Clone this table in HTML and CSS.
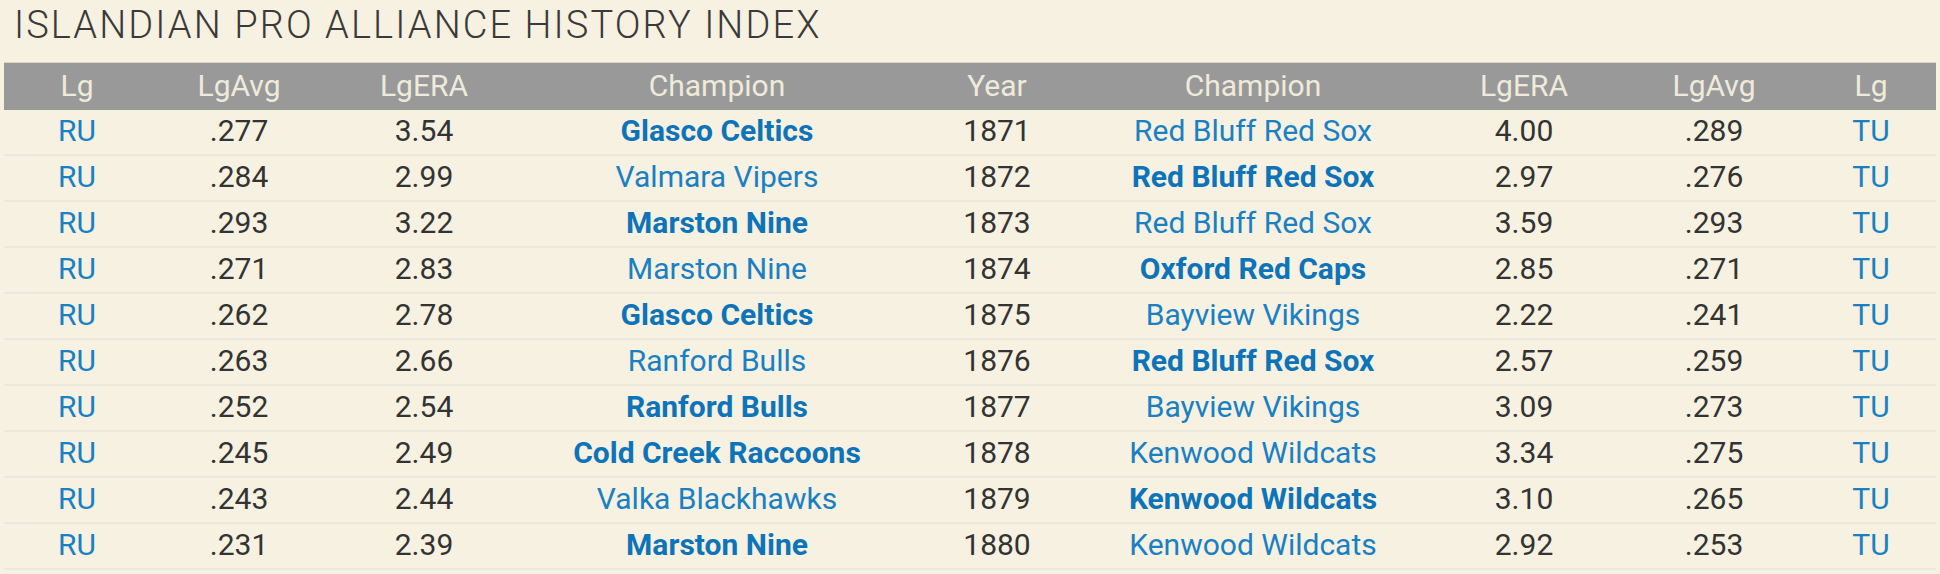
FILE: index.html
```html
<!DOCTYPE html>
<html lang="en">
<head>
<meta charset="utf-8">
<title>Islandian Pro Alliance History Index</title>
<link rel="stylesheet" href="styles.css">
</head>
<body>
<div class="page">
  <h1 class="title">ISLANDIAN PRO ALLIANCE HISTORY INDEX</h1>
  <table class="history">
    <colgroup>
      <col class="c-lg"><col class="c-avg"><col class="c-era"><col class="c-champ"><col class="c-year"><col class="c-champ2"><col class="c-era2"><col class="c-avg2"><col class="c-lg2">
    </colgroup>
    <thead>
      <tr><th>Lg</th><th>LgAvg</th><th>LgERA</th><th>Champion</th><th>Year</th><th>Champion</th><th>LgERA</th><th>LgAvg</th><th>Lg</th></tr>
    </thead>
    <tbody>
      <tr><td><a class="lnk">RU</a></td><td>.277</td><td>3.54</td><td><a class="lnk win">Glasco Celtics</a></td><td>1871</td><td><a class="lnk">Red Bluff Red Sox</a></td><td>4.00</td><td>.289</td><td><a class="lnk">TU</a></td></tr>
      <tr><td><a class="lnk">RU</a></td><td>.284</td><td>2.99</td><td><a class="lnk">Valmara Vipers</a></td><td>1872</td><td><a class="lnk win">Red Bluff Red Sox</a></td><td>2.97</td><td>.276</td><td><a class="lnk">TU</a></td></tr>
      <tr><td><a class="lnk">RU</a></td><td>.293</td><td>3.22</td><td><a class="lnk win">Marston Nine</a></td><td>1873</td><td><a class="lnk">Red Bluff Red Sox</a></td><td>3.59</td><td>.293</td><td><a class="lnk">TU</a></td></tr>
      <tr><td><a class="lnk">RU</a></td><td>.271</td><td>2.83</td><td><a class="lnk">Marston Nine</a></td><td>1874</td><td><a class="lnk win">Oxford Red Caps</a></td><td>2.85</td><td>.271</td><td><a class="lnk">TU</a></td></tr>
      <tr><td><a class="lnk">RU</a></td><td>.262</td><td>2.78</td><td><a class="lnk win">Glasco Celtics</a></td><td>1875</td><td><a class="lnk">Bayview Vikings</a></td><td>2.22</td><td>.241</td><td><a class="lnk">TU</a></td></tr>
      <tr><td><a class="lnk">RU</a></td><td>.263</td><td>2.66</td><td><a class="lnk">Ranford Bulls</a></td><td>1876</td><td><a class="lnk win">Red Bluff Red Sox</a></td><td>2.57</td><td>.259</td><td><a class="lnk">TU</a></td></tr>
      <tr><td><a class="lnk">RU</a></td><td>.252</td><td>2.54</td><td><a class="lnk win">Ranford Bulls</a></td><td>1877</td><td><a class="lnk">Bayview Vikings</a></td><td>3.09</td><td>.273</td><td><a class="lnk">TU</a></td></tr>
      <tr><td><a class="lnk">RU</a></td><td>.245</td><td>2.49</td><td><a class="lnk win">Cold Creek Raccoons</a></td><td>1878</td><td><a class="lnk">Kenwood Wildcats</a></td><td>3.34</td><td>.275</td><td><a class="lnk">TU</a></td></tr>
      <tr><td><a class="lnk">RU</a></td><td>.243</td><td>2.44</td><td><a class="lnk">Valka Blackhawks</a></td><td>1879</td><td><a class="lnk win">Kenwood Wildcats</a></td><td>3.10</td><td>.265</td><td><a class="lnk">TU</a></td></tr>
      <tr><td><a class="lnk">RU</a></td><td>.231</td><td>2.39</td><td><a class="lnk win">Marston Nine</a></td><td>1880</td><td><a class="lnk">Kenwood Wildcats</a></td><td>2.92</td><td>.253</td><td><a class="lnk">TU</a></td></tr>
    </tbody>
  </table>
</div>
</body>
</html>
```
FILE: styles.css
```css
html, body {
  margin: 0;
  padding: 0;
  background: #f6f1e0;
}
body {
  font-family: Roboto, "Liberation Sans", sans-serif;
  color: #333;
}
.page {
  padding: 0 4px;
}
.title {
  margin: 0;
  padding: 6px 0 0 10px;
  box-sizing: border-box;
  height: 62px;
  font-size: 38px;
  line-height: 38px;
  font-weight: 300;
  color: #3a3a3a;
  letter-spacing: 2.1px;
}
.history {
  width: 1932px;
  border-collapse: collapse;
  table-layout: fixed;
  font-size: 30px;
}
.c-lg { width: 146px; }
.c-avg { width: 178px; }
.c-era { width: 192px; }
.c-champ { width: 394px; }
.c-year { width: 166px; }
.c-champ2 { width: 346px; }
.c-era2 { width: 196px; }
.c-avg2 { width: 184px; }
.c-lg2 { width: 130px; }
.history th {
  background: #999999;
  color: #efebdc;
  font-weight: 400;
  height: 44px;
  padding: 0 0 3px;
  text-align: center;
  border-top: 1px solid #d9d5c8;
}
.history td {
  height: 40px;
  padding: 0 0 4px;
  text-align: center;
  border-bottom: 2px solid #ebe8e0;
  color: #333;
}
.lnk {
  color: #1a80c4;
  text-decoration: none;
}
.lnk.win {
  color: #0e74b9;
  font-weight: 700;
}
```
